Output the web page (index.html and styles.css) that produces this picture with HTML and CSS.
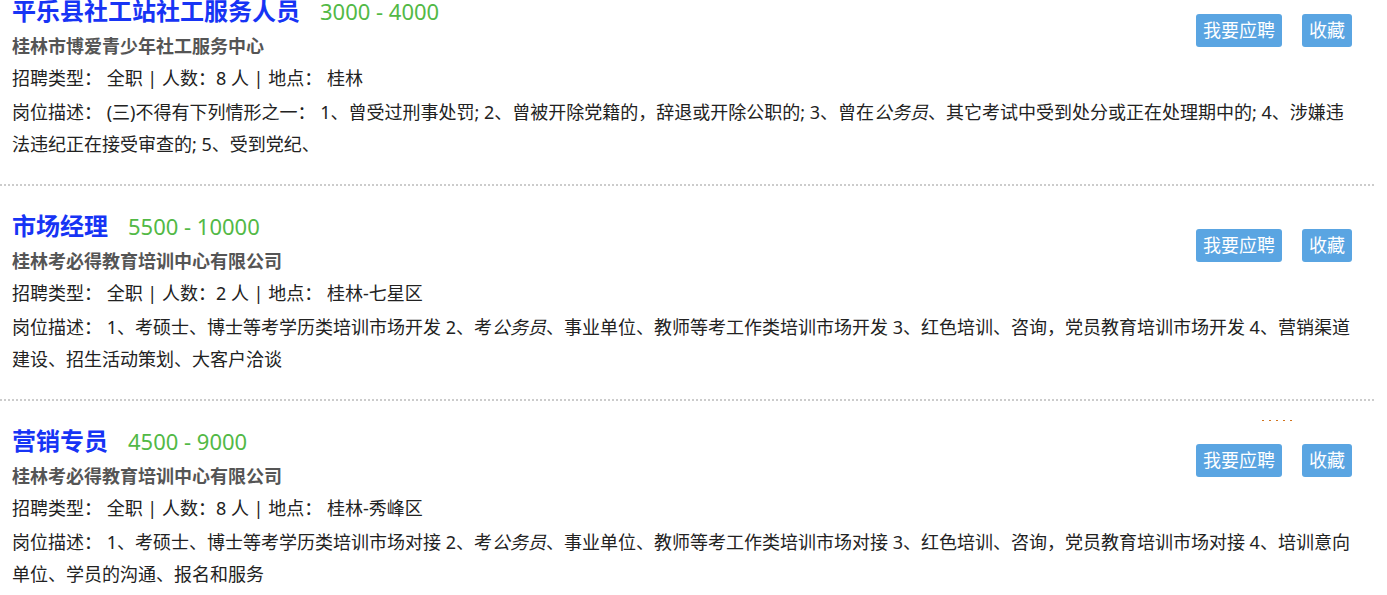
FILE: index.html
```html
<!DOCTYPE html>
<html lang="zh-CN">
<head>
    <meta charset="UTF-8">
    <meta name="viewport" content="width=device-width, initial-scale=1.0">
    <title>招聘信息</title>
    <link rel="stylesheet" href="styles.css">
</head>
<body>

    <div class="job-list">

        <!-- 职位 1 -->
        <div class="job-item">
            <div class="job-head">
                <div class="job-main">
                    <h3 class="job-title">平乐县社工站社工服务人员<span class="salary">3000 - 4000</span></h3>
                    <div class="company">桂林市博爱青少年社工服务中心</div>
                    <div class="info">招聘类型： 全职 | 人数：8 人 | 地点： 桂林</div>
                </div>
                <div class="actions">
                    <button class="btn">我要应聘</button>
                    <button class="btn">收藏</button>
                </div>
            </div>
            <p class="desc">岗位描述： (三)不得有下列情形之一： 1、曾受过刑事处罚; 2、曾被开除党籍的，辞退或开除公职的; 3、曾在<em>公务员</em>、其它考试中受到处分或正在处理期中的; 4、涉嫌违法违纪正在接受审查的; 5、受到党纪、</p>
        </div>

        <!-- 职位 2 -->
        <div class="job-item">
            <div class="job-head">
                <div class="job-main">
                    <h3 class="job-title">市场经理<span class="salary">5500 - 10000</span></h3>
                    <div class="company">桂林考必得教育培训中心有限公司</div>
                    <div class="info">招聘类型： 全职 | 人数：2 人 | 地点： 桂林-七星区</div>
                </div>
                <div class="actions">
                    <button class="btn">我要应聘</button>
                    <button class="btn">收藏</button>
                </div>
            </div>
            <p class="desc">岗位描述： 1、考硕士、博士等考学历类培训市场开发 2、考<em>公务员</em>、事业单位、教师等考工作类培训市场开发 3、红色培训、咨询，党员教育培训市场开发 4、营销渠道建设、招生活动策划、大客户洽谈</p>
        </div>

        <!-- 职位 3 -->
        <div class="job-item">
            <span class="hot-mark"></span>
            <div class="job-head">
                <div class="job-main">
                    <h3 class="job-title">营销专员<span class="salary">4500 - 9000</span></h3>
                    <div class="company">桂林考必得教育培训中心有限公司</div>
                    <div class="info">招聘类型： 全职 | 人数：8 人 | 地点： 桂林-秀峰区</div>
                </div>
                <div class="actions">
                    <button class="btn">我要应聘</button>
                    <button class="btn">收藏</button>
                </div>
            </div>
            <p class="desc">岗位描述： 1、考硕士、博士等考学历类培训市场对接 2、考<em>公务员</em>、事业单位、教师等考工作类培训市场对接 3、红色培训、咨询，党员教育培训市场对接 4、培训意向单位、学员的沟通、报名和服务</p>
        </div>

    </div>

</body>
</html>
```

FILE: styles.css
```css
/* 职位列表 */
body {
    font-family: "Noto Sans", "Noto Sans CJK SC", sans-serif;
    background-color: #fff;
    color: #222;
    margin: 0;
    overflow: hidden;
}
.job-list {
    width: 1374px;
    margin-top: -29px;
}
/* 单个职位 */
.job-item {
    position: relative;
    padding: 21px 16px 24px 12px;
    border-bottom: 2px dotted #ccc;
}
.job-head {
    display: flex;
    justify-content: space-between;
}
.job-title {
    margin: 0;
    font-size: 24px;
    line-height: 38px;
    font-weight: bold;
    color: #1734f5;
}
.salary {
    margin-left: 20px;
    font-size: 22px;
    font-weight: normal;
    color: #52b946;
}
.company {
    font-size: 18px;
    line-height: 32px;
    font-weight: bold;
    color: #555;
}
.info {
    font-size: 18px;
    line-height: 32px;
}
.desc {
    margin: 2px 0 0 0;
    font-size: 18px;
    line-height: 32px;
}
.desc em {
    font-style: italic;
}
/* 按钮 */
.actions {
    display: flex;
    gap: 20px;
    margin-top: 22px;
    margin-right: 6px;
    align-items: flex-start;
}
.btn {
    height: 33px;
    padding: 0 7px;
    border: none;
    border-radius: 3px;
    background-color: #5aa5e2;
    color: #fff;
    font-family: inherit;
    font-size: 18px;
    line-height: 33px;
    cursor: pointer;
}
.hot-mark {
    position: absolute;
    top: 19px;
    right: 78px;
    width: 34px;
    height: 1px;
    background: repeating-linear-gradient(to right, #d2741e 0 2px, transparent 2px 7px);
}
```
